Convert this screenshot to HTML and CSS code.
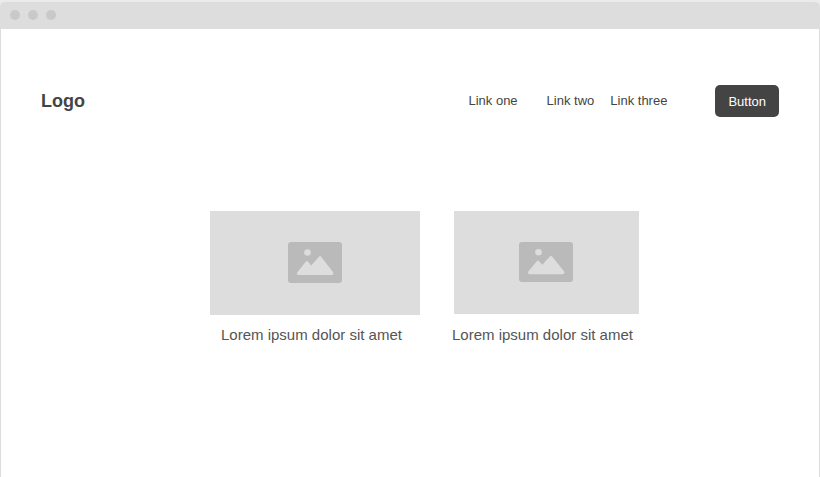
FILE: index.html
```html
<!DOCTYPE html>
<html lang="en">
<head>
<meta charset="utf-8">
<meta name="viewport" content="width=device-width, initial-scale=1">
<title>Wireframe</title>
<link rel="stylesheet" href="styles.css">
</head>
<body>
<div class="window">
  <div class="titlebar">
    <span class="dot"></span>
    <span class="dot"></span>
    <span class="dot"></span>
  </div>
  <div class="page">
    <header class="header">
      <a class="logo" href="#">Logo</a>
      <nav class="nav">
        <a class="link link-first" href="#">Link one</a>
        <a class="link" href="#">Link two</a>
        <a class="link" href="#">Link three</a>
      </nav>
      <button class="button" type="button">Button</button>
    </header>
    <main class="gallery">
      <figure class="card card-wide">
        <div class="placeholder">
          <svg class="icon" viewBox="0 0 54 41" preserveAspectRatio="none" aria-hidden="true">
            <rect class="frame" width="54" height="41" rx="3"/>
            <circle class="shape" cx="19.500" cy="10.500" r="3.300"/>
            <path class="shape" d="M9.300 30.200 17.800 19.700Q18.900 18.300 20 19.700L23.300 23.400 31.100 14.600Q32 13.600 32.900 14.600L45 30Q46.300 33 43.500 33H11Q8.200 33 9.300 30.200Z"/>
          </svg>
        </div>
        <figcaption class="caption">Lorem ipsum dolor sit amet</figcaption>
      </figure>
      <figure class="card card-narrow">
        <div class="placeholder">
          <svg class="icon" viewBox="0 0 54 41" preserveAspectRatio="none" aria-hidden="true">
            <rect class="frame" width="54" height="41" rx="3"/>
            <circle class="shape" cx="19.500" cy="10.500" r="3.300"/>
            <path class="shape" d="M9.300 30.200 17.800 19.700Q18.900 18.300 20 19.700L23.300 23.400 31.100 14.600Q32 13.600 32.900 14.600L45 30Q46.300 33 43.500 33H11Q8.200 33 9.300 30.200Z"/>
          </svg>
        </div>
        <figcaption class="caption">Lorem ipsum dolor sit amet</figcaption>
      </figure>
    </main>
  </div>
</div>
</body>
</html>
```

FILE: styles.css
```css
* {
  box-sizing: border-box;
}

body {
  margin: 0;
  background: #ebebeb;
  color: #444;
  font-family: "Liberation Sans", Arial, sans-serif;
}

.window {
  display: flex;
  flex-direction: column;
  min-height: 100vh;
  padding-top: 2px;
}

.titlebar {
  display: flex;
  gap: 8px;
  padding: 8px 10px 9px;
  border-radius: 5px 5px 0 0;
  background: #ddd;
}

.dot {
  width: 10px;
  height: 10px;
  border-radius: 50%;
  background: #c9c9c9;
}

.page {
  flex: 1;
  border: solid #ddd;
  border-width: 0 1px;
  background: #fff;
}

.header {
  display: flex;
  align-items: center;
  padding: 56px 40px 0;
}

.logo {
  color: #444;
  font-size: 18px;
  font-weight: 700;
  line-height: 24px;
  text-decoration: none;
}

.nav {
  display: flex;
  gap: 16px;
  margin-left: auto;
  margin-right: 48px;
}

.link {
  color: #444;
  font-size: 13px;
  line-height: 16px;
  text-decoration: none;
}

.link-first {
  margin-right: 13px;
}

.button {
  height: 32px;
  padding: 2px 13px 0;
  border: 0;
  border-radius: 5px;
  background: #444;
  color: #fff;
  font: 13px/16px "Liberation Sans", Arial, sans-serif;
}

.gallery {
  display: grid;
  grid-template-columns: 210fr 187fr;
  gap: 32px;
  padding: 94px 180px 0 209px;
}

.card {
  display: flex;
  flex-direction: column;
  justify-content: space-between;
  margin: 0;
}

.placeholder {
  display: flex;
  justify-content: center;
  padding: 31px 1px 32px 0;
  background: #ddd;
}

.icon {
  display: block;
  width: 54px;
  height: 41px;
}

.frame {
  fill: #bababa;
}

.shape {
  fill: #ddd;
}

.caption {
  color: #555;
  font-size: 15px;
  line-height: 20px;
  padding-top: 10px;
  white-space: nowrap;
}

.card-wide .caption {
  padding-left: 11px;
}

.card-narrow .placeholder {
  margin-left: 2px;
}

.card-narrow .icon {
  height: 40px;
}
```
